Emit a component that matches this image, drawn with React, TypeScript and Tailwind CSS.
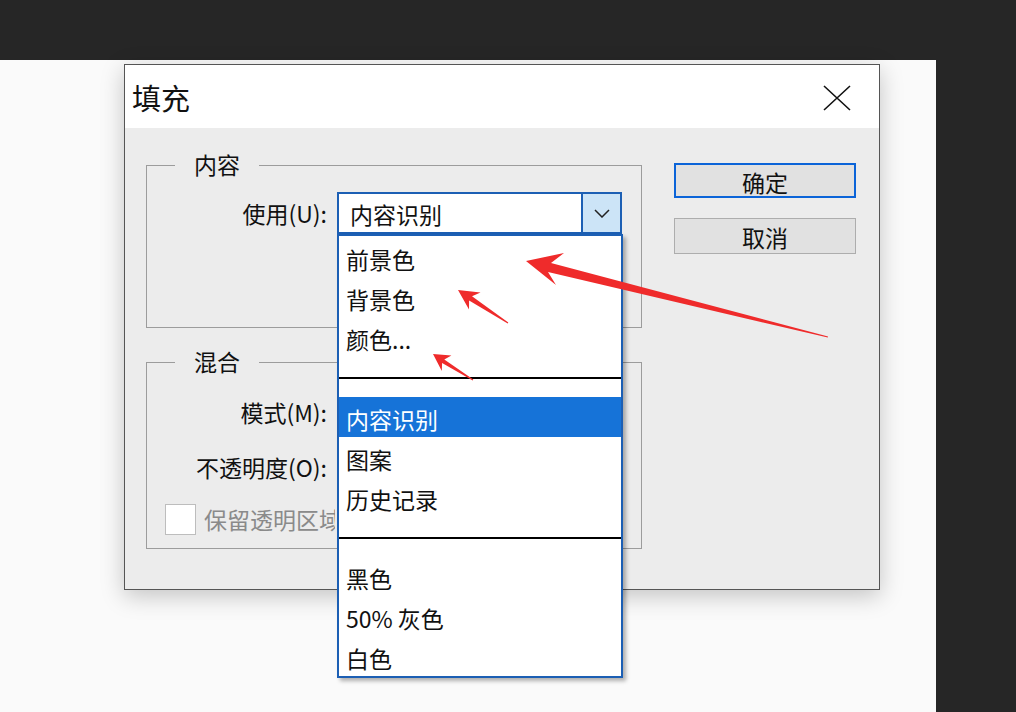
import React from 'react';

const listGroups: string[][] = [
  ['前景色', '背景色', '颜色...'],
  ['内容识别', '图案', '历史记录'],
  ['黑色', '50% 灰色', '白色'],
];

const ListRow: React.FC<{ label: string; active?: boolean }> = ({ label, active }) => (
  <div
    className={`h-[40px] flex items-center pl-[7px] pt-[5px] text-[23px] ${
      active ? 'bg-[#1673d8] text-white' : 'text-[#111]'
    }`}
  >
    {label}
  </div>
);

// Open dropdown of the 使用 combo box
const DropdownList: React.FC = () => (
  <div className="absolute -left-[2px] top-[40px] z-10 w-[286px] border-2 border-[#1c5fb4] bg-white shadow-[3px_3px_4px_rgba(0,0,0,0.3)]">
    <div className="pt-px">
      {listGroups[0].map((l) => (
        <ListRow key={l} label={l} />
      ))}
    </div>
    <div className="h-[20px]" />
    <div className="h-[2px] bg-black" />
    <div className="h-[18px]" />
    {listGroups[1].map((l) => (
      <ListRow key={l} label={l} active={l === '内容识别'} />
    ))}
    <div className="h-[20px]" />
    <div className="h-[2px] bg-black" />
    <div className="h-[17px]" />
    {listGroups[2].map((l) => (
      <ListRow key={l} label={l} />
    ))}
  </div>
);

const GroupBox: React.FC<{ title: string; className: string; children: React.ReactNode }> = ({
  title,
  className,
  children,
}) => (
  <div className={`relative w-[496px] border border-[#9c9c9c] ${className}`}>
    <span className="absolute -top-[17px] left-[28px] px-[19px] bg-[#ececec] text-[23px] leading-[30px] text-[#111]">
      {title}
    </span>
    {children}
  </div>
);

const FieldLabel: React.FC<{ text: string }> = ({ text }) => (
  <div className="w-[180px] flex justify-end text-[23px] text-[#111] whitespace-nowrap">{text}</div>
);

const Arrows: React.FC = () => (
  <svg className="absolute left-0 top-0 z-20 pointer-events-none" width="1016" height="712" viewBox="0 0 1016 712">
    <g fill="#ef2b2b">
      <polygon points="526,261 564,253 551,263 828,336.4 827.8,337.6 548,272 556,285" />
      <polygon points="458,290 480.5,292.5 472,296.2 508.3,322.6 507.7,323.4 469.1,300.6 469,309.5" />
      <polygon points="433,354 451.4,355.5 444.3,359.5 473.3,379.6 472.7,380.4 442.1,363.1 441.8,371" />
    </g>
  </svg>
);

export default function App() {
  return (
    <div className="relative w-[1016px] h-[712px] overflow-hidden flex flex-col bg-[#262626] font-['Noto_Sans_CJK_SC',sans-serif]">
      {/* top app bar */}
      <div className="h-[60px] shrink-0 bg-[#262626]" />

      <div className="flex flex-1">
        {/* canvas */}
        <div className="w-[936px] bg-[#fafafa] pl-[124px] pt-[4px]">
          <div className="w-[756px] h-[526px] border border-[#555] flex flex-col shadow-[0_6px_22px_rgba(0,0,0,0.22)]">
            {/* title bar */}
            <div className="h-[63px] shrink-0 bg-white flex items-center justify-between pl-[7px] pr-[28px] pt-[2px]">
              <span className="text-[29px] text-[#111]">填充</span>
              <svg width="28" height="26" viewBox="0 0 28 26">
                <path d="M1 1 L27 25 M27 1 L1 25" stroke="#111" strokeWidth="1.6" fill="none" />
              </svg>
            </div>

            {/* body */}
            <div className="flex-1 bg-[#ececec] flex">
              <div className="pl-[21px]">
                <GroupBox title="内容" className="mt-[37px] h-[163px]">
                  <div className="mt-[26px] flex items-center">
                    <FieldLabel text="使用(U):" />
                    <div className="relative ml-[10px] w-[285px] h-[42px] border-2 border-[#1c5fb4] bg-white flex">
                      <div className="flex-1 flex items-center pl-[11px] pt-[2px] text-[23px] text-[#111]">内容识别</div>
                      <div className="w-[39px] border-l-2 border-[#1c5fb4] bg-[#cce4f7] flex items-center justify-center">
                        <svg width="16" height="9" viewBox="0 0 16 9">
                          <path d="M1 1 L8 8 L15 1" stroke="#222" strokeWidth="1.5" fill="none" />
                        </svg>
                      </div>
                      <DropdownList />
                    </div>
                  </div>
                </GroupBox>

                <GroupBox title="混合" className="mt-[34px] h-[187px]">
                  <div className="mt-[28px] h-[42px] flex items-center">
                    <FieldLabel text="模式(M):" />
                    <div className="ml-[10px] w-[285px] h-[42px] border border-[#adadad] bg-white" />
                  </div>
                  <div className="mt-[13px] h-[42px] flex items-center">
                    <FieldLabel text="不透明度(O):" />
                    <div className="ml-[10px] w-[120px] h-[42px] border border-[#adadad] bg-white" />
                  </div>
                  <div className="mt-[14px] ml-[18px] flex items-center">
                    <div className="w-[31px] h-[31px] border border-[#bdbdbd] bg-white" />
                    <span className="ml-[8px] w-[131px] overflow-hidden text-[23px] text-[#8a8a8a] whitespace-nowrap">
                      保留透明区域
                    </span>
                  </div>
                </GroupBox>
              </div>

              {/* buttons */}
              <div className="ml-[32px] mt-[35px] flex flex-col">
                <button className="w-[182px] h-[35px] border-2 border-[#0b64d8] bg-[#e1e1e1] text-[23px] leading-none text-[#111] flex items-center justify-center pt-[3px]">
                  确定
                </button>
                <button className="mt-[20px] w-[182px] h-[36px] border border-[#adadad] bg-[#e1e1e1] text-[23px] leading-none text-[#111] flex items-center justify-center pt-[3px]">
                  取消
                </button>
              </div>
            </div>
          </div>
        </div>

        {/* right dark panel */}
        <div className="flex-1 bg-[#262626]" />
      </div>

      <Arrows />
    </div>
  );
}
